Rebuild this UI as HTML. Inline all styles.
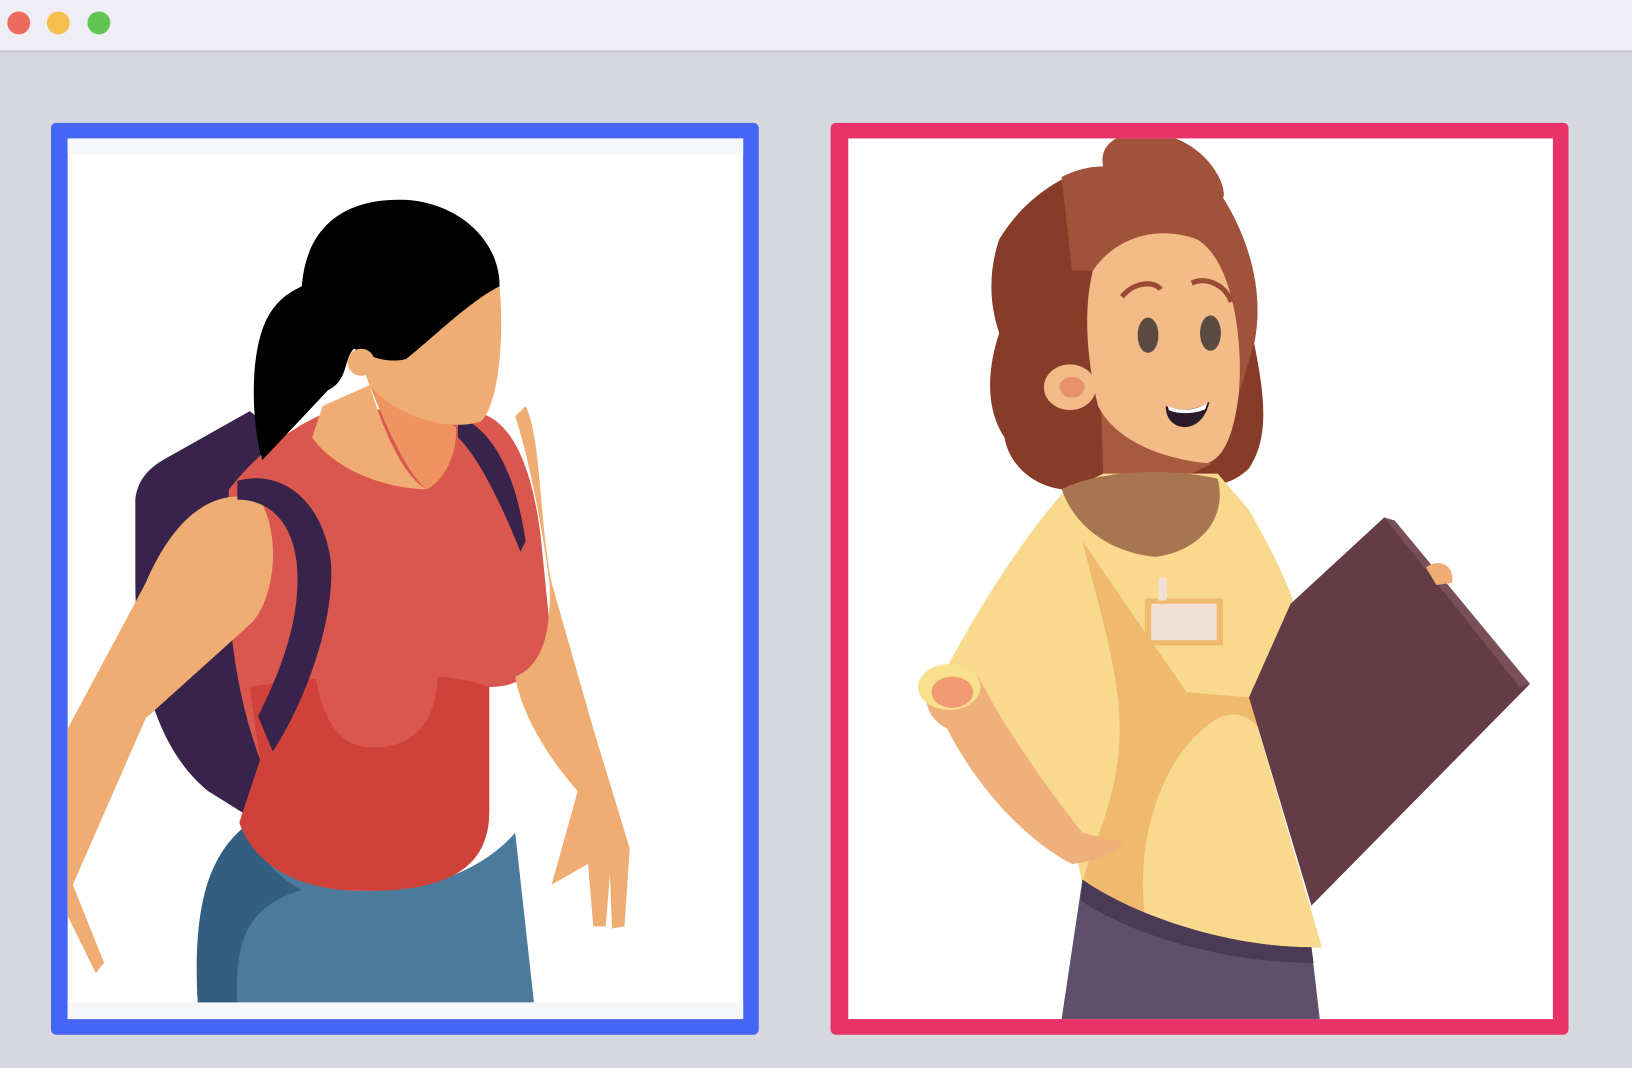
<!DOCTYPE html>
<html><head><meta charset="utf-8"><style>
html,body{margin:0;padding:0;width:1632px;height:1068px;overflow:hidden;background:#d7d8dd}
svg{display:block}
</style></head><body>
<svg width="1632" height="1068" viewBox="0 0 1568 1026" preserveAspectRatio="none" xmlns="http://www.w3.org/2000/svg">
<defs>
<clipPath id="cl"><rect x="65" y="133" width="649" height="846"/></clipPath>
<clipPath id="cr"><rect x="815" y="133" width="677" height="846"/></clipPath>
</defs>
<rect width="1568" height="1026" fill="#d7d8dd"/>
<rect width="1568" height="49" fill="#f0eef5"/>
<rect y="48.5" width="1568" height="1" fill="#b9b9bd"/>
<circle cx="18" cy="22" r="11" fill="#ed6a5e"/>
<circle cx="56" cy="22" r="11" fill="#f5bf4f"/>
<circle cx="95" cy="22" r="11" fill="#61c554"/>

<!-- left frame -->
<rect x="49" y="118" width="680" height="876" rx="5" fill="#4565f6"/>
<rect x="65" y="133" width="649" height="846" fill="#fff"/>
<rect x="65" y="133" width="649" height="15" fill="#f6f7f9"/>
<rect x="65" y="963" width="649" height="16" fill="#f6f7f9"/>
<g clip-path="url(#cl)">
<path d="M160,440 L240,395 L300,440 L320,560 L262,720 L240,785 L200,760 C150,720 130,640 130,560 L130,480 C132,460 145,448 160,440 Z" fill="#38244a"/>
<path d="M240,790 C200,820 185,870 190,963 L513,963 L495,800 C460,840 400,860 330,855 Z" fill="#4b7a9c"/>
<path d="M240,790 C200,820 185,870 190,963 L228,963 C225,900 240,870 290,855 C260,840 245,815 240,790 Z" fill="#335e80"/>
<path d="M220,470 C260,420 300,400 330,390 L430,400 C480,380 510,430 520,520 L530,620 C510,660 480,660 470,660 L470,780 C470,840 420,860 330,855 C270,850 240,820 230,790 L250,730 C220,650 215,560 220,470 Z" fill="#d9574f"/>
<path d="M240,660 C300,650 420,640 470,660 L470,780 C470,840 420,860 330,855 C270,850 240,820 230,790 L250,730 Z" fill="#d0413a"/>
<path d="M300,600 C330,560 410,570 420,630 C425,690 400,720 355,718 C320,716 300,680 300,600 Z" fill="#d9574f"/>
<path d="M505,390 C520,420 518,500 530,560 L570,700 L605,815 L600,890 L588,892 L586,840 L582,890 L570,890 L565,830 L530,850 L555,760 C520,720 500,680 495,650 C520,640 530,610 528,560 C520,500 508,440 495,400 Z" fill="#f0ad73"/>
<path d="M65,700 L140,560 C170,490 210,468 250,480 C272,520 262,580 240,600 L140,690 L70,850 L100,925 L92,935 L65,880 Z" fill="#f0ad73"/>
<path d="M228,462 C270,450 310,480 318,540 C322,600 290,680 262,722 L248,688 C272,640 290,590 285,540 C280,500 258,480 228,480 Z" fill="#38244a"/>
<path d="M440,400 C470,410 495,450 505,520 L500,530 C480,480 460,440 440,420 Z" fill="#38244a"/>
<path d="M310,390 L355,370 C370,420 390,460 410,470 C370,470 320,450 300,420 Z" fill="#f0ad73"/>
<path d="M355,370 C375,420 395,460 410,470 C430,460 440,430 438,410 Z" fill="#ef9360"/>
<path d="M340,330 L400,330 C440,290 470,270 480,275 C485,330 478,390 462,405 C430,415 380,400 355,370 Z" fill="#f0ad73"/>
<path d="M290,275 C295,210 340,190 390,192 C440,195 480,230 480,275 C450,290 410,330 390,345 C370,350 350,340 340,335 C330,345 335,365 315,375 L252,442 C240,400 240,330 260,300 C270,285 280,280 290,275 Z" fill="#000"/>
<circle cx="347" cy="348" r="13" fill="#f0ad73"/>
</g>

<!-- right frame -->
<rect x="798" y="118" width="709" height="876" rx="5" fill="#e8336a"/>
<rect x="815" y="133" width="677" height="846" fill="#fff"/>
<g clip-path="url(#cr)">
<path d="M960,230 C990,180 1040,160 1060,160 C1055,135 1080,125 1110,128 C1160,135 1180,180 1175,190 C1200,230 1215,280 1205,330 C1215,380 1220,420 1200,450 C1180,470 1150,470 1130,460 L1040,470 C1000,475 970,450 965,420 C945,390 950,350 960,320 C950,290 950,260 960,230 Z" fill="#873c2a"/>
<path d="M1020,170 C1040,160 1055,160 1060,160 C1055,135 1080,125 1110,128 C1160,135 1180,180 1175,190 C1200,230 1215,280 1205,330 L1190,380 L1100,260 L1030,260 Z" fill="#a0533a"/>
<path d="M1058,390 L1060,460 L1130,462 L1165,445 C1110,440 1075,420 1058,390 Z" fill="#a85a3e"/>
<path d="M1050,260 C1070,230 1110,215 1150,230 C1185,250 1195,330 1190,380 C1185,420 1175,440 1160,445 C1110,440 1070,420 1055,390 C1045,350 1040,300 1050,260 Z" fill="#f2bb88"/>
<ellipse cx="1028" cy="372" rx="25" ry="22" fill="#f2bb88"/>
<ellipse cx="1030" cy="372" rx="12" ry="10" fill="#e88f6c"/>
<ellipse cx="1103" cy="322" rx="10" ry="17" fill="#5a4a40"/>
<ellipse cx="1163" cy="320" rx="10" ry="17" fill="#5a4a40"/>
<path d="M1078,285 C1090,270 1110,270 1115,278" stroke="#9a4a35" stroke-width="5" fill="none"/>
<path d="M1145,272 C1160,265 1178,275 1183,290" stroke="#9a4a35" stroke-width="5" fill="none"/>
<path d="M1120,390 C1135,396 1150,394 1162,386 C1158,405 1145,412 1135,410 C1125,408 1120,400 1120,390 Z" fill="#2b1a2a"/>
<path d="M1122,390 C1135,396 1150,394 1160,387 L1158,393 C1148,398 1132,398 1123,394 Z" fill="#fff"/>
<path d="M1020,475 L1060,455 L1170,455 L1200,490 C1240,560 1260,610 1255,660 L1200,670 L1270,910 C1200,915 1100,890 1040,850 L1030,800 C980,740 920,690 900,660 C930,600 980,520 1020,475 Z" fill="#f8d98e"/>
<path d="M1040,520 C1060,600 1080,660 1075,720 C1070,780 1045,820 1040,850 C1060,870 1090,880 1100,880 C1090,800 1120,720 1170,690 C1190,680 1210,690 1220,720 L1200,670 L1140,665 Z" fill="#efb96e"/>
<path d="M1040,845 L1020,979 L1268,979 L1260,910 C1180,910 1090,880 1040,845 Z" fill="#5f4f6a"/>
<path d="M1040,845 C1090,880 1180,910 1260,910 L1262,925 C1180,925 1090,900 1038,865 Z" fill="#4a3a55"/>
<path d="M1020,470 C1060,450 1130,450 1170,460 C1180,500 1150,530 1110,535 C1060,530 1030,500 1020,470 Z" fill="#a87550"/>
<rect x="1100" y="575" width="75" height="45" fill="#efb96e"/>
<rect x="1106" y="580" width="63" height="35" fill="#f0e0d6"/>
<rect x="1113" y="555" width="8" height="22" fill="#f0e0d6"/>
<polygon points="1240,580 1330,497 1470,657 1260,870 1200,670" fill="#643c45"/>
<polygon points="1330,497 1340,500 1470,657 1460,660" fill="#7a5058"/>
<path d="M1370,545 C1385,535 1398,545 1395,560 L1380,562 Z" fill="#f0ad73"/>
<path d="M895,650 C885,670 890,690 910,700 C940,760 990,810 1030,830 C1050,828 1070,820 1080,810 L1040,800 C1000,750 960,690 940,650 Z" fill="#f0b07c"/>
<ellipse cx="912" cy="660" rx="30" ry="22" fill="#f8e08e"/>
<ellipse cx="915" cy="665" rx="20" ry="15" fill="#ef9a72"/>
</g>
</svg>
</body></html>
